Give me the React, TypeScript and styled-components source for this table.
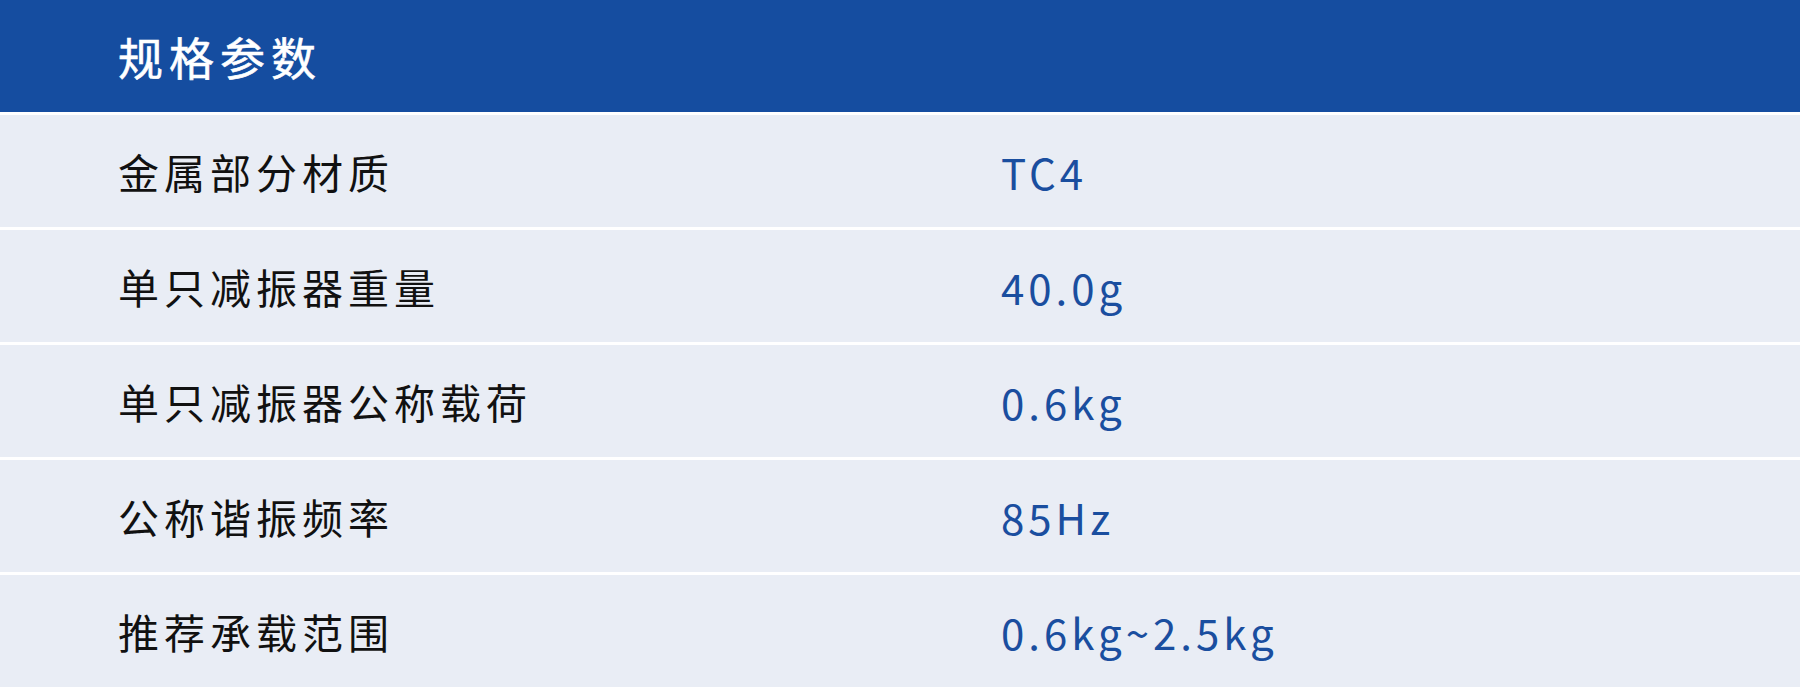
import React from 'react'
import styled, { createGlobalStyle } from 'styled-components'

const GlobalStyle = createGlobalStyle`
    html, body {
        margin: 0;
        padding: 0;
        background: #ffffff;
    }
    body {
        font-family: "Noto Sans CJK SC", "Noto Sans", sans-serif;
    }
`

const Table = styled.section`
    width: 1800px;
    display: flex;
    flex-direction: column;
`

const Header = styled.header`
    height: 112px;
    background: #154da0;
    display: flex;
    align-items: center;
    padding-left: 118px;
    color: #ffffff;
    font-size: 45px;
    font-weight: 400;
    letter-spacing: 6px;
    -webkit-text-stroke: 0.6px #ffffff;
`

const Row = styled.div`
    height: 112px;
    border-top: 3px solid #ffffff;
    background: #e9edf5;
    display: grid;
    grid-template-columns: 883px 1fr;
    align-items: center;
    padding-left: 118px;
`

const Label = styled.span`
    color: #111111;
    font-size: 41px;
    letter-spacing: 5px;
`

const Value = styled.span`
    color: #1a4e9f;
    font-size: 42px;
    letter-spacing: 4px;
`

const specs = [
    { label: '金属部分材质', value: 'TC4' },
    { label: '单只减振器重量', value: '40.0g' },
    { label: '单只减振器公称载荷', value: '0.6kg' },
    { label: '公称谐振频率', value: '85Hz' },
    { label: '推荐承载范围', value: '0.6kg~2.5kg' },
]

const App = () => {
    return (
        <>
            <GlobalStyle />
            <Table>
                <Header>规格参数</Header>
                {specs.map(spec => (
                    <Row key={spec.label}>
                        <Label>{spec.label}</Label>
                        <Value>{spec.value}</Value>
                    </Row>
                ))}
            </Table>
        </>
    )
}

export default App
